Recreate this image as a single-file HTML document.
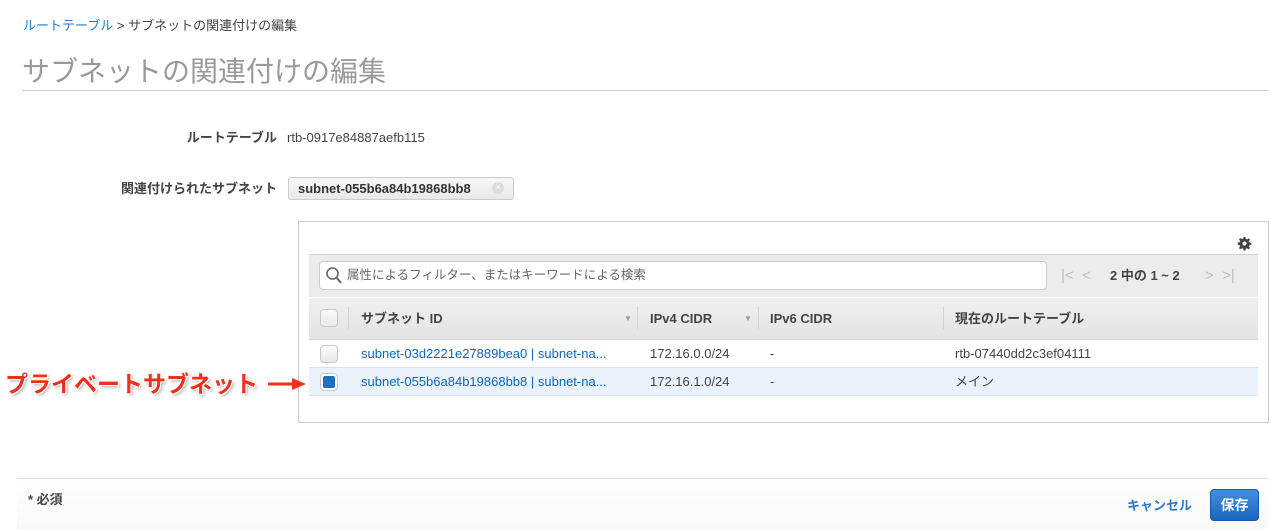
<!DOCTYPE html>
<html><head><meta charset="utf-8"><style>
*{margin:0;padding:0;box-sizing:border-box}
body{width:1270px;height:529px;background:#fff;font-family:"Liberation Sans","Noto Sans CJK JP",sans-serif;color:#444;position:relative;overflow:hidden;font-size:13px}
.a{position:absolute;white-space:nowrap;line-height:16px}
.t{margin-top:1px}
.cb{position:absolute;width:18px;height:18px;border:1px solid #c8c8c8;border-radius:4px;background:linear-gradient(#fafafa,#eaeaea)}
.hd{font-weight:bold;color:#444;font-size:13px}
.dv{position:absolute;width:1px;background:#d4d4d4}
.lk{color:#1166bb}
</style></head><body>
<div class="a t" style="left:23px;top:17px;font-size:13px"><span style="color:#1a7fd6">ルートテーブル</span> <span style="color:#444">&gt; サブネットの関連付けの編集</span></div>
<div class="a" style="left:22px;top:57px;font-size:28px;line-height:30px;color:#9a9a9a">サブネットの関連付けの編集</div>
<div class="a" style="left:22px;top:90px;width:1246px;height:1px;background:#ccc"></div>
<div class="a hd t" style="right:993px;top:129px">ルートテーブル</div>
<div class="a t" style="left:287px;top:129px;color:#444">rtb-0917e84887aefb115</div>
<div class="a hd t" style="right:993px;top:180px">関連付けられたサブネット</div>
<div class="a" style="left:288px;top:177px;width:226px;height:23px;border:1px solid #ccc;border-radius:3px;background:linear-gradient(#f7f7f7,#e9e9e9)"></div>
<div class="a t" style="left:298px;top:180px;font-weight:bold;color:#333">subnet-055b6a84b19868bb8</div>
<div class="a" style="left:492px;top:182px;width:12px;height:12px;border-radius:50%;background:#ddd;color:#fff;font-size:10px;line-height:12px;text-align:center">×</div>

<div class="a" style="left:298px;top:221px;width:971px;height:202px;border:1px solid #ccc"></div>
<svg class="a" style="left:1237px;top:236px" width="15" height="15" viewBox="0 0 16 16"><path fill="#444" d="M7 1h2l.4 2 1.4.6 1.7-1.2 1.4 1.4-1.2 1.7.6 1.4 2 .4v2l-2 .4-.6 1.4 1.2 1.7-1.4 1.4-1.7-1.2-1.4.6-.4 2H7l-.4-2-1.4-.6-1.7 1.2-1.4-1.4 1.2-1.7-.6-1.4-2-.4V7l2-.4.6-1.4-1.2-1.7 1.4-1.4 1.7 1.2 1.4-.6z"/><circle cx="8" cy="8" r="2.2" fill="#fff"/></svg>
<div class="a" style="left:309px;top:254px;width:949px;height:43px;background:#ececec;border-top:1px solid #d0d0d0"></div>
<div class="a" style="left:319px;top:261px;width:728px;height:29px;background:#fff;border:1px solid #ccc;border-radius:4px"></div>
<svg class="a" style="left:325px;top:266px" width="18" height="19" viewBox="0 0 18 19"><circle cx="7.5" cy="7.5" r="5.5" fill="none" stroke="#666" stroke-width="1.6"/><path d="M11.5 11.5l4.5 5.5" stroke="#666" stroke-width="2"/></svg>
<div class="a t" style="left:347px;top:266px;font-size:12.5px;color:#666">属性によるフィルター、またはキーワードによる検索</div>
<div class="a" style="left:1061px;top:268px;font-size:15px;color:#bbb">|&lt;&nbsp;&nbsp;&lt;</div>
<div class="a t" style="left:1110px;top:267px;font-weight:bold;color:#444">2 中の 1 ~ 2</div>
<div class="a" style="left:1205px;top:268px;font-size:15px;color:#bbb">&gt;&nbsp;&nbsp;&gt;|</div>

<div class="a" style="left:309px;top:297px;width:949px;height:43px;background:linear-gradient(#efefef,#e4e4e4);border-top:1px solid #fff;border-bottom:1px solid #d0d0d0"></div>
<div class="cb" style="left:320px;top:309px"></div>
<div class="dv" style="left:348px;top:307px;height:22px"></div>
<div class="a hd t" style="left:361px;top:310px">サブネット ID</div>
<div class="a" style="left:624px;top:311px;font-size:8px;color:#999">▼</div>
<div class="dv" style="left:637px;top:307px;height:22px"></div>
<div class="a hd t" style="left:650px;top:310px">IPv4 CIDR</div>
<div class="a" style="left:744px;top:311px;font-size:8px;color:#999">▼</div>
<div class="dv" style="left:758px;top:307px;height:22px"></div>
<div class="a hd t" style="left:770px;top:310px">IPv6 CIDR</div>
<div class="dv" style="left:943px;top:307px;height:22px"></div>
<div class="a hd t" style="left:955px;top:310px">現在のルートテーブル</div>

<div class="a" style="left:309px;top:340px;width:949px;height:28px;border-bottom:1px solid #e0e0e0"></div>
<div class="cb" style="left:320px;top:345px"></div>
<div class="a lk" style="left:361px;top:346px">subnet-03d2221e27889bea0 | subnet-na...</div>
<div class="a" style="left:650px;top:346px">172.16.0.0/24</div>
<div class="a" style="left:770px;top:346px">-</div>
<div class="a" style="left:955px;top:346px">rtb-07440dd2c3ef04111</div>

<div class="a" style="left:309px;top:368px;width:949px;height:28px;background:#eaf2fc;border-bottom:1px solid #d8e2ee"></div>
<div class="cb" style="left:320px;top:373px;background:#fff"></div>
<div class="a" style="left:323px;top:376px;width:12px;height:12px;border-radius:2px;background:#1f6fc5"></div>
<div class="a lk" style="left:361px;top:374px">subnet-055b6a84b19868bb8 | subnet-na...</div>
<div class="a" style="left:650px;top:374px">172.16.1.0/24</div>
<div class="a" style="left:770px;top:374px">-</div>
<div class="a" style="left:955px;top:374px">メイン</div>

<div class="a" style="left:5px;top:371px;font-size:23px;line-height:26px;font-weight:bold;color:#f0301a;text-shadow:1px 1px 0 #fff,-1px -1px 0 #fff,1px -1px 0 #fff,-1px 1px 0 #fff,2px 2px 3px rgba(0,0,0,.35)">プライベートサブネット</div>
<svg class="a" style="left:266px;top:376px" width="42" height="16"><path d="M2 8h26" stroke="#f0301a" stroke-width="3"/><path d="M26 2l14 6-14 6z" fill="#f0301a"/></svg>

<div class="a" style="left:17px;top:478px;width:1251px;height:1px;background:#ddd"></div>
<div class="a" style="left:17px;top:479px;width:1251px;height:50px;background:linear-gradient(#fff,#f9f9f9)"></div>
<div class="a t" style="left:28px;top:491px;font-weight:bold;color:#444">* 必須</div>
<div class="a t" style="left:1127px;top:497px;font-weight:bold;color:#2a7ad0">キャンセル</div>
<div class="a" style="left:1210px;top:489px;width:49px;height:32px;border-radius:4px;background:linear-gradient(#3f8fe0,#1b67c0);border:1px solid #165aa8;color:#fff;font-weight:bold;font-size:14px;line-height:30px;text-align:center">保存</div>
</body></html>
